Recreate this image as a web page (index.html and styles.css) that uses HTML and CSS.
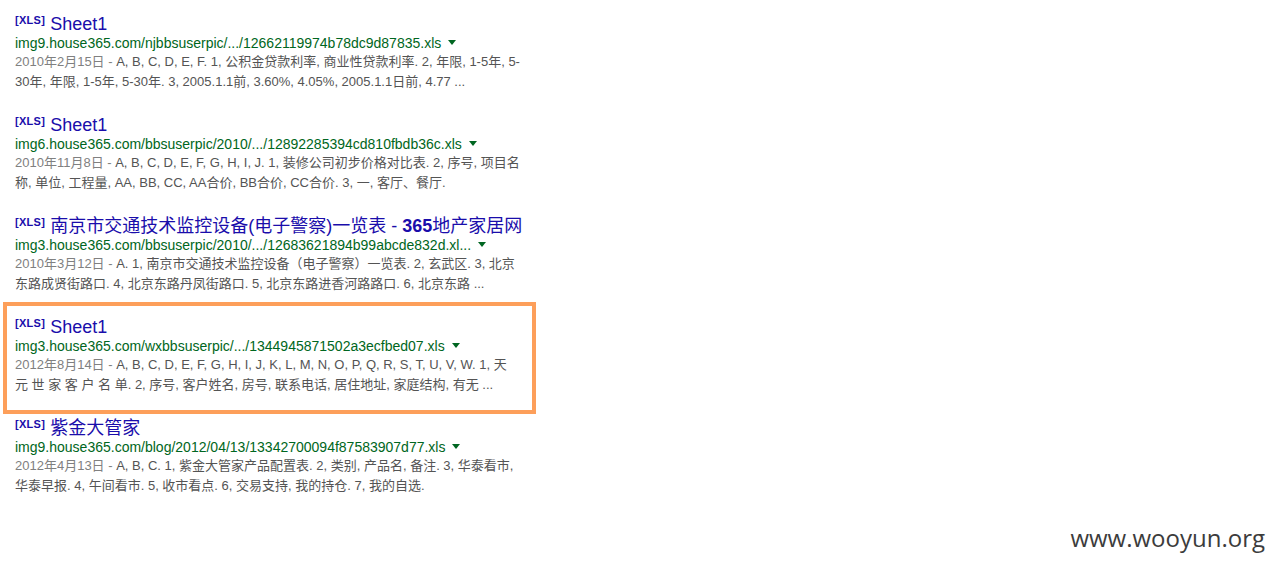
FILE: index.html
```html
<!DOCTYPE html>
<html lang="zh-CN">
<head>
    <meta charset="UTF-8">
    <title>house365 xls - 搜索结果</title>
    <link rel="stylesheet" href="styles.css">
</head>
<body>

    <div class="results">
        <div class="result">
            <h3 class="title"><span class="tag">[XLS]</span> <a href="#">Sheet1</a></h3>
            <div class="url">img9.house365.com/njbbsuserpic/.../12662119974b78dc9d87835.xls<span class="arrow"></span></div>
            <div class="snippet"><span class="date">2010年2月15日 - </span>A, B, C, D, E, F. 1, 公积金贷款利率, 商业性贷款利率. 2, 年限, 1-5年, 5-30年, 年限, 1-5年, 5-30年. 3, 2005.1.1前, 3.60%, 4.05%, 2005.1.1日前, 4.77 ...</div>
        </div>

        <div class="result">
            <h3 class="title"><span class="tag">[XLS]</span> <a href="#">Sheet1</a></h3>
            <div class="url">img6.house365.com/bbsuserpic/2010/.../12892285394cd810fbdb36c.xls<span class="arrow"></span></div>
            <div class="snippet"><span class="date">2010年11月8日 - </span>A, B, C, D, E, F, G, H, I, J. 1, 装修公司初步价格对比表. 2, 序号, 项目名称, 单位, 工程量, AA, BB, CC, AA合价, BB合价, CC合价. 3, 一, 客厅、餐厅.</div>
        </div>

        <div class="result">
            <h3 class="title"><span class="tag">[XLS]</span> <a href="#">南京市交通技术监控设备(电子警察)一览表 - <b>365</b>地产家居网</a></h3>
            <div class="url">img3.house365.com/bbsuserpic/2010/.../12683621894b99abcde832d.xl...<span class="arrow"></span></div>
            <div class="snippet"><span class="date">2010年3月12日 - </span>A. 1, 南京市交通技术监控设备（电子警察）一览表. 2, 玄武区. 3, 北京东路成贤街路口. 4, 北京东路丹凤街路口. 5, 北京东路进香河路路口. 6, 北京东路 ...</div>
        </div>

        <div class="result">
            <h3 class="title"><span class="tag">[XLS]</span> <a href="#">Sheet1</a></h3>
            <div class="url">img3.house365.com/wxbbsuserpic/.../1344945871502a3ecfbed07.xls<span class="arrow"></span></div>
            <div class="snippet"><span class="date">2012年8月14日 - </span>A, B, C, D, E, F, G, H, I, J, K, L, M, N, O, P, Q, R, S, T, U, V, W. 1, 天 元 世 家 客 户 名 单. 2, 序号, 客户姓名, 房号, 联系电话, 居住地址, 家庭结构, 有无 ...</div>
        </div>

        <div class="result">
            <h3 class="title"><span class="tag">[XLS]</span> <a href="#">紫金大管家</a></h3>
            <div class="url">img9.house365.com/blog/2012/04/13/13342700094f87583907d77.xls<span class="arrow"></span></div>
            <div class="snippet"><span class="date">2012年4月13日 - </span>A, B, C. 1, 紫金大管家产品配置表. 2, 类别, 产品名, 备注. 3, 华泰看市, 华泰早报. 4, 午间看市. 5, 收市看点. 6, 交易支持, 我的持仓. 7, 我的自选.</div>
        </div>
    </div>

    <div class="highlight"></div>
    <div class="watermark">www.wooyun.org</div>

</body>
</html>
```

FILE: styles.css
```css
body {
    margin: 0;
    padding: 0;
    background-color: #fff;
    font-family: 'Liberation Sans', Arial, 'Noto Sans CJK SC', sans-serif;
    color: #545454;
    width: 1274px;
    height: 567px;
    overflow: hidden;
}
.results {
    padding: 14px 0 0 15px;
    width: 506px;
}
.result {
    margin-bottom: 23px;
}
.title {
    margin: 0;
    font-size: 18px;
    font-weight: normal;
    line-height: 20px;
    height: 20px;
    white-space: nowrap;
}
.title a {
    color: #1a0dab;
    text-decoration: none;
}
.title b {
    font-weight: bold;
}
.tag {
    color: #1a0dab;
    font-size: 11px;
    font-weight: bold;
    line-height: 0;
    vertical-align: 6px;
    letter-spacing: 0.3px;
}
.url {
    color: #006621;
    font-size: 14px;
    line-height: 18px;
    height: 18px;
    white-space: nowrap;
}
.arrow {
    display: inline-block;
    margin-left: 7px;
    vertical-align: 3px;
    border-left: 4px solid transparent;
    border-right: 4px solid transparent;
    border-top: 5px solid #006621;
}
.snippet {
    font-size: 13px;
    line-height: 20px;
    height: 40px;
    overflow: hidden;
    color: #545454;
}
.date {
    color: #808080;
}
.highlight {
    position: absolute;
    left: 3px;
    top: 302px;
    width: 525px;
    height: 104px;
    border: 4px solid #fd9f5a;
}
.watermark {
    position: absolute;
    right: 9px;
    top: 521px;
    font-family: 'Open Sans', 'DejaVu Sans', sans-serif;
    font-size: 24px;
    color: #3c3c3c;
}
```
